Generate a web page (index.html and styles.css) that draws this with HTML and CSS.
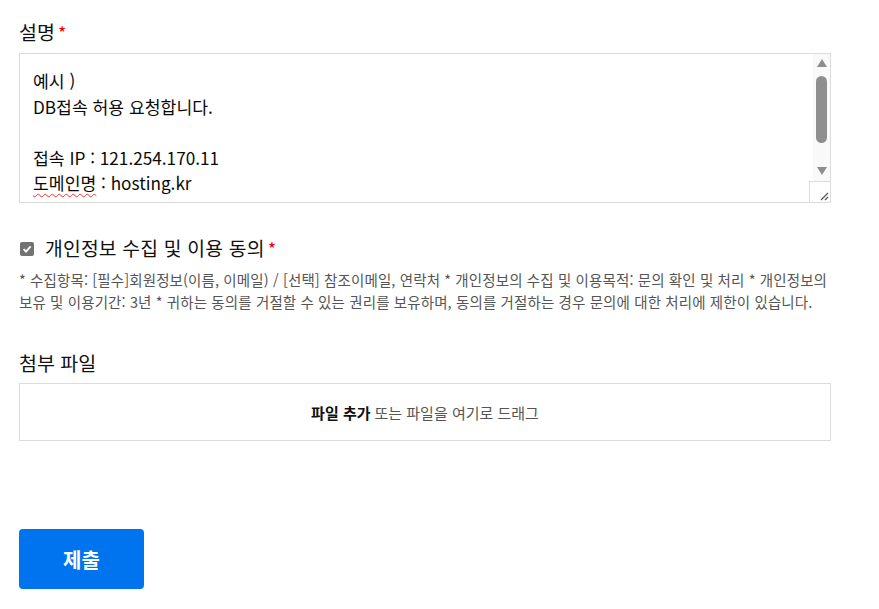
FILE: index.html
```html
<!DOCTYPE html>
<html lang="ko">
<head>
<meta charset="utf-8">
<link rel="stylesheet" href="styles.css">
</head>
<body>
<form class="form">
  <div class="field">
    <div class="label">설명<span class="req">*</span></div>
    <div class="ta-wrap">
      <div class="textarea">예시 )
DB접속 허용 요청합니다.

접속 IP : 121.254.170.11
<span class="spell">도메인명</span> : hosting.kr</div>
      <div class="scrollbar" aria-hidden="true">
        <span class="arrow up"></span>
        <span class="thumb"></span>
        <span class="arrow down"></span>
      </div>
      <div class="corner" aria-hidden="true">
        <svg width="10" height="10" viewBox="0 0 10 10"><path d="M9 2 L2 9 M9 6 L6 9" stroke="#555" stroke-width="1.2" fill="none"/></svg>
      </div>
    </div>
  </div>

  <div class="agree">
    <label class="check-row"><span class="chk"><svg width="10" height="10" viewBox="0 0 10 10"><path d="M1.6 5.2 L4 7.6 L8.6 2.4" stroke="#fff" stroke-width="1.8" fill="none"/></svg></span><span class="check-label">개인정보 수집 및 이용 동의<span class="req">*</span></span></label>
    <p class="notice">* 수집항목: [필수]회원정보(이름, 이메일) / [선택] 참조이메일, 연락처 * 개인정보의 수집 및 이용목적: 문의 확인 및 처리 * 개인정보의 보유 및 이용기간: 3년 * 귀하는 동의를 거절할 수 있는 권리를 보유하며, 동의를 거절하는 경우 문의에 대한 처리에 제한이 있습니다.</p>
  </div>

  <div class="field files">
    <div class="label">첨부 파일</div>
    <div class="dropzone"><b>파일 추가</b> 또는 파일을 여기로 드래그</div>
  </div>

  <button type="button" class="submit">제출</button>
</form>
</body>
</html>
```
FILE: styles.css
```css
* { box-sizing: border-box; }
html, body { margin: 0; padding: 0; background: #fff; }
body {
  font-family: "Noto Sans CJK KR", "Noto Sans", sans-serif;
  color: #111;
}
.form {
  width: 812px;
  margin-left: 19px;
  padding-top: 19px;
  display: flex;
  flex-direction: column;
}
.label {
  font-size: 19.5px;
  line-height: 26px;
  height: 26px;
  color: #111;
  margin-bottom: 8px;
}
.req { color: #e00; margin-left: 3px; font-size: 18px; }
.ta-wrap {
  position: relative;
  height: 150px;
  border: 1px solid #dcdcdc;
}
.textarea {
  height: 100%;
  padding: 14px 13px;
  font-size: 17.2px;
  line-height: 25.6px;
  white-space: pre-wrap;
  overflow: hidden;
  color: #0a0a0a;
}
.spell {
  text-decoration: underline wavy #e33;
  text-decoration-thickness: 1px;
  text-underline-offset: 3px;
  text-decoration-skip-ink: none;
}
.scrollbar {
  position: absolute;
  top: 0;
  right: 0;
  width: 17px;
  height: 127px;
  background: #f9f9f9;
  display: flex;
  flex-direction: column;
  align-items: center;
}
.arrow {
  width: 0;
  height: 0;
  border-left: 5.5px solid transparent;
  border-right: 5.5px solid transparent;
}
.arrow.up { margin-top: 5px; border-bottom: 8px solid #8d8d8d; }
.arrow.down { margin-top: auto; margin-bottom: 6px; border-top: 8px solid #8d8d8d; }
.thumb {
  margin-top: 9px;
  width: 11px;
  height: 67px;
  border-radius: 6px;
  background: #8f8f8f;
}
.corner {
  position: absolute;
  right: 0;
  bottom: 0;
  width: 21px;
  height: 21px;
  border-left: 1px solid #dcdcdc;
  border-top: 1px solid #dcdcdc;
  background: #fff;
  display: flex;
  align-items: flex-end;
  justify-content: flex-end;
  padding: 0 1px 1px 0;
}
.agree { margin-top: 33px; }
.check-row { display: flex; align-items: center; height: 24px; }
.chk {
  width: 14px;
  height: 14px;
  margin: 2px 11px 0 1px;
  border-radius: 2px;
  background: #737373;
  display: flex;
  align-items: center;
  justify-content: center;
}
.check-label { font-size: 19.3px; color: #111; letter-spacing: 0.2px; }
.notice {
  margin: 9px -6px 0 0;
  font-size: 14.5px;
  line-height: 22px;
  color: #555;
  letter-spacing: 0.12px;
  word-break: keep-all;
}
.files { margin-top: 37px; }
.dropzone {
  height: 58px;
  margin-top: -1px;
  border: 1px solid #dcdcdc;
  display: flex;
  align-items: center;
  justify-content: center;
  font-size: 15px;
  color: #555;
  gap: 4px;
}
.dropzone b { color: #111; font-weight: 700; }
.submit {
  margin-top: 88px;
  width: 125px;
  height: 60px;
  border: 0;
  border-radius: 4px;
  background: #0073ef;
  color: #fff;
  font-family: inherit;
  font-size: 20px;
  font-weight: 700;
  align-self: flex-start;
}
```
